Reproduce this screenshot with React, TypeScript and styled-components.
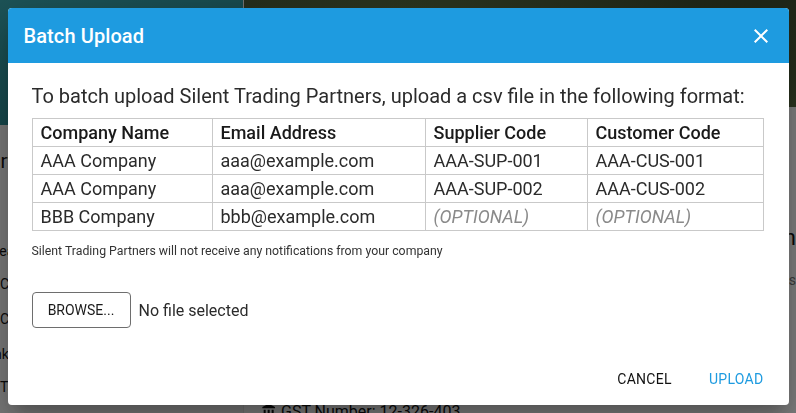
import * as React from 'react';
import styled, { createGlobalStyle } from 'styled-components';

// ========================
// Values
// ========================

const blue = '#1e9be0';
const text = '#2b2b2b';
const grid = '#c9c9c9';
const font = `Roboto, 'Liberation Sans', Arial, sans-serif`;

const GlobalStyle = createGlobalStyle`
  html, body {
    margin: 0;
    padding: 0;
    width: 796px;
    height: 413px;
    overflow: hidden;
    font-family: ${font};
    background: #fff;
  }
`;

// ========================
// Page behind the modal
// ========================

const Page = styled.div`
  display: flex;
  width: 796px;
  height: 413px;
  background: #fdfdfd;
`;

const Sidebar = styled.aside`
  width: 243px;
  flex-shrink: 0;
  display: flex;
  flex-direction: column;
  background: #f2f2f2;
  border-right: 1px solid #e4e4e4;
`;

const ProfileBlock = styled.div`
  height: 125px;
  background: linear-gradient(160deg, #3aa6ae, #2c8e96 60%, #3c9ea3);
`;

const SideHeading = styled.div`
  margin-top: 24px;
  font-size: 20px;
  color: #111;
  text-indent: -23px;
`;

const SideItem = styled.div<{ indent: number; top: number }>`
  margin-top: ${(p) => p.top}px;
  font-size: 14px;
  color: #111;
  text-indent: ${(p) => p.indent}px;
  white-space: nowrap;
`;

const Main = styled.main`
  flex: 1;
  display: flex;
  flex-direction: column;
`;

const Hero = styled.div`
  height: 107px;
  background:
    radial-gradient(ellipse at 30% 20%, #5c7044 0%, transparent 55%),
    radial-gradient(ellipse at 75% 60%, #4a5a36 0%, transparent 50%),
    linear-gradient(180deg, #3f4d30, #56683f);
`;

const MainContent = styled.div`
  flex: 1;
  display: flex;
  flex-direction: column;
  padding: 0 0 0 17px;
`;

const InfoRow = styled.div`
  margin-top: 118px;
  display: flex;
  justify-content: flex-end;
  font-size: 22px;
  color: #111;
  white-space: nowrap;
`;

const InfoSub = styled.div`
  margin-top: 22px;
  display: flex;
  justify-content: flex-end;
  font-size: 14px;
  color: #777;
`;

const Gst = styled.div`
  margin-top: auto;
  margin-bottom: -9px;
  display: flex;
  align-items: center;
  gap: 4px;
  font-size: 16px;
  color: #111;
  height: 22px;
`;

// ========================
// Modal
// ========================

const Backdrop = styled.div`
  position: fixed;
  inset: 0;
  background: rgba(0, 0, 0, 0.5);
  display: flex;
  align-items: center;
  justify-content: center;
`;

const Dialog = styled.div`
  width: 781px;
  height: 397px;
  background: #fff;
  border-radius: 4px;
  overflow: hidden;
  display: flex;
  flex-direction: column;
  box-shadow: 0 11px 15px -7px rgba(0, 0, 0, 0.2), 0 24px 38px 3px rgba(0, 0, 0, 0.14),
    0 9px 46px 8px rgba(0, 0, 0, 0.12);
`;

const Header = styled.div`
  height: 55px;
  flex-shrink: 0;
  background: ${blue};
  display: flex;
  align-items: center;
  justify-content: space-between;
  padding: 0 16px 0 16px;
`;

const Title = styled.h2`
  margin: 0;
  font-size: 20px;
  font-weight: 500;
  color: #fff;
  letter-spacing: 0.1px;
`;

const CloseButton = styled.button`
  border: 0;
  padding: 0;
  background: transparent;
  width: 24px;
  height: 24px;
  display: flex;
  cursor: pointer;
`;

const Body = styled.div`
  flex: 1;
  padding: 21px 25px 0 24px;
  display: flex;
  flex-direction: column;
  align-items: flex-start;
`;

const Intro = styled.p`
  margin: 0;
  font-size: 20px;
  line-height: 24px;
  color: ${text};
  white-space: nowrap;
`;

const Table = styled.table`
  margin-top: 10px;
  width: 731px;
  border-collapse: collapse;
  table-layout: fixed;
  border: 1px solid ${grid};
`;

const Cell = styled.td<{ muted?: boolean }>`
  height: 27px;
  padding: 0 8px;
  border: 1px solid ${grid};
  font-size: 18px;
  line-height: 26px;
  color: ${(p) => (p.muted ? '#8a8a8a' : text)};
  font-style: ${(p) => (p.muted ? 'italic' : 'normal')};
  white-space: nowrap;
`;

const HeadCell = styled(Cell).attrs({ as: 'th' })`
  font-weight: 500;
  text-align: left;
  color: #1a1a1a;
`;

const Note = styled.p`
  margin: 12px 0 0;
  font-size: 12.3px;
  line-height: 16px;
  color: #333;
`;

const FileRow = styled.div`
  margin-top: 33px;
  display: flex;
  align-items: center;
  gap: 8px;
`;

const BrowseButton = styled.button`
  width: 99px;
  height: 36px;
  border: 1px solid #6e6e6e;
  border-radius: 4px;
  background: #fff;
  font-family: ${font};
  font-size: 14px;
  color: #1a1a1a;
  cursor: pointer;
`;

const FileName = styled.span`
  font-size: 16px;
  color: ${text};
`;

const Actions = styled.div`
  display: flex;
  justify-content: flex-end;
  gap: 21px;
  padding: 8px 17px 8px;
`;

const ActionButton = styled.button<{ primary?: boolean }>`
  border: 0;
  background: transparent;
  padding: 6px 8px;
  height: 36px;
  min-width: 64px;
  font-family: ${font};
  font-size: 14px;
  letter-spacing: 0.3px;
  color: ${(p) => (p.primary ? blue : '#111')};
  cursor: pointer;
`;

// ========================
// Data
// ========================

const columns = ['Company Name', 'Email Address', 'Supplier Code', 'Customer Code'];
const widths = [180, 213, 162, 176];

const rows = [
  ['AAA Company', 'aaa@example.com', 'AAA-SUP-001', 'AAA-CUS-001'],
  ['AAA Company', 'aaa@example.com', 'AAA-SUP-002', 'AAA-CUS-002'],
  ['BBB Company', 'bbb@example.com', '', ''],
];

const sideItems = [
  { label: 'Search', indent: -9, top: 70 },
  { label: 'Company', indent: 0, top: 17 },
  { label: 'Contact', indent: 0, top: 19 },
  { label: 'Links', indent: -17, top: 19 },
  { label: 'Tax', indent: 0, top: 17 },
];

export default function App() {
  return (
    <>
      <GlobalStyle />
      <Page>
        <Sidebar>
          <ProfileBlock />
          <SideHeading>Partners</SideHeading>
          {sideItems.map((item) => (
            <SideItem key={item.label} indent={item.indent} top={item.top}>
              {item.label}
            </SideItem>
          ))}
        </Sidebar>
        <Main>
          <Hero />
          <MainContent>
            <InfoRow>Company Information</InfoRow>
            <InfoSub>Details</InfoSub>
            <Gst>
              <svg width="16" height="16" viewBox="0 0 24 24">
                <path d="M4 10v7h3v-7H4zm6 0v7h3v-7h-3zM2 22h19v-3H2v3zm14-12v7h3v-7h-3zm-4.5-9L2 6v2h19V6l-9.5-5z" fill="#111" />
              </svg>
              GST Number: 12-326-403
            </Gst>
          </MainContent>
        </Main>
      </Page>

      <Backdrop>
        <Dialog role="dialog">
          <Header>
            <Title>Batch Upload</Title>
            <CloseButton aria-label="close">
              <svg width="24" height="24" viewBox="0 0 24 24">
                <path
                  d="M19 6.41 17.59 5 12 10.59 6.41 5 5 6.41 10.59 12 5 17.59 6.41 19 12 13.41 17.59 19 19 17.59 13.41 12z"
                  fill="#fff"
                />
              </svg>
            </CloseButton>
          </Header>
          <Body>
            <Intro>
              To batch upload Silent Trading Partners, upload a csv file in the following format:
            </Intro>
            <Table>
              <colgroup>
                {widths.map((w, i) => (
                  <col key={i} style={{ width: w }} />
                ))}
              </colgroup>
              <thead>
                <tr>
                  {columns.map((c) => (
                    <HeadCell key={c}>{c}</HeadCell>
                  ))}
                </tr>
              </thead>
              <tbody>
                {rows.map((r, ri) => (
                  <tr key={ri}>
                    {r.map((v, ci) => (
                      <Cell key={ci} muted={!v}>
                        {v || '(OPTIONAL)'}
                      </Cell>
                    ))}
                  </tr>
                ))}
              </tbody>
            </Table>
            <Note>Silent Trading Partners will not receive any notifications from your company</Note>
            <FileRow>
              <BrowseButton>BROWSE...</BrowseButton>
              <FileName>No file selected</FileName>
            </FileRow>
          </Body>
          <Actions>
            <ActionButton>CANCEL</ActionButton>
            <ActionButton primary>UPLOAD</ActionButton>
          </Actions>
        </Dialog>
      </Backdrop>
    </>
  );
}
